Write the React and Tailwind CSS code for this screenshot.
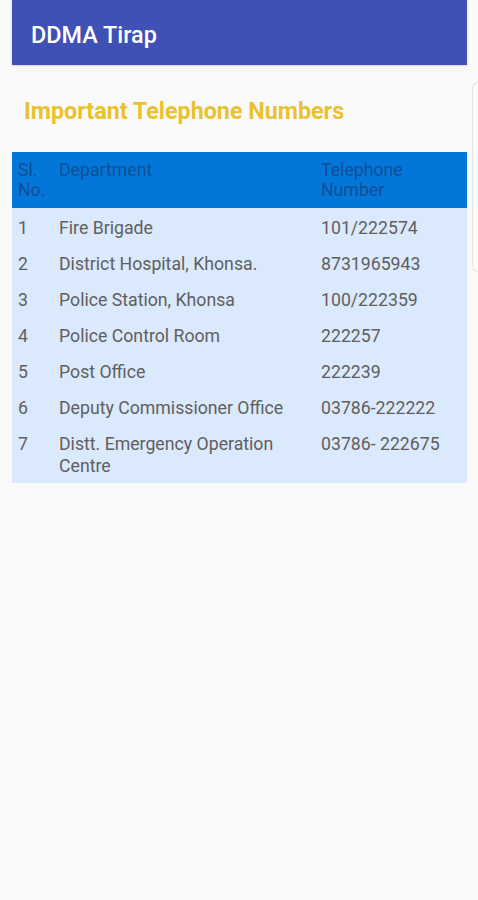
import React from "react";

const rows = [
  ["1", "Fire Brigade", "101/222574"],
  ["2", "District Hospital, Khonsa.", "8731965943"],
  ["3", "Police Station, Khonsa", "100/222359"],
  ["4", "Police Control Room", "222257"],
  ["5", "Post Office", "222239"],
  ["6", "Deputy Commissioner Office", "03786-222222"],
  ["7", "Distt. Emergency Operation Centre", "03786- 222675"],
];

export default function App() {
  return (
    <div
      className="relative w-[478px] h-[900px] bg-[#fafafa] overflow-hidden"
      style={{ fontFamily: "Roboto, 'Noto Sans', sans-serif" }}
    >
      <div className="ml-3 w-[455px] h-[65px] bg-[#3f51b5] flex items-center pl-[19px] pt-[4px] shadow-[0_1px_2px_rgba(0,0,0,0.15)]">
        <span className="text-white text-[23.4px] font-medium leading-[28px]">DDMA Tirap</span>
      </div>

      <div className="absolute right-0 top-[82px] w-[6px] h-[190px] border border-r-0 border-[#e4e4e4] rounded-l-[6px]"></div>

      <h1 className="ml-6 mt-[32px] text-[23.3px] font-bold leading-[28px] text-[#e8c22f]">
        Important Telephone Numbers
      </h1>

      <div className="ml-3 w-[455px] mt-[27px] text-[17.7px]">
        <div className="grid grid-cols-[41px_262px_1fr] bg-[#0277d9] text-[#114e95] leading-[20px] pt-[8px] pb-[8px]">
          <div className="pl-[6px]">Sl.<br />No.</div>
          <div className="pl-[6px]">Department</div>
          <div className="pl-[6px]">Telephone<br />Number</div>
        </div>
        <div className="bg-[#dbe9fc] text-[#5f5f5f] pb-[1px]">
          {rows.map((r) => (
            <div key={r[0]} className="grid grid-cols-[41px_262px_1fr] leading-[22px] pt-[9px] pb-[5px]">
              <div className="pl-[6px]">{r[0]}</div>
              <div className="pl-[6px] pr-[20px]">{r[1]}</div>
              <div className="pl-[6px]">{r[2]}</div>
            </div>
          ))}
        </div>
      </div>
    </div>
  );
}
